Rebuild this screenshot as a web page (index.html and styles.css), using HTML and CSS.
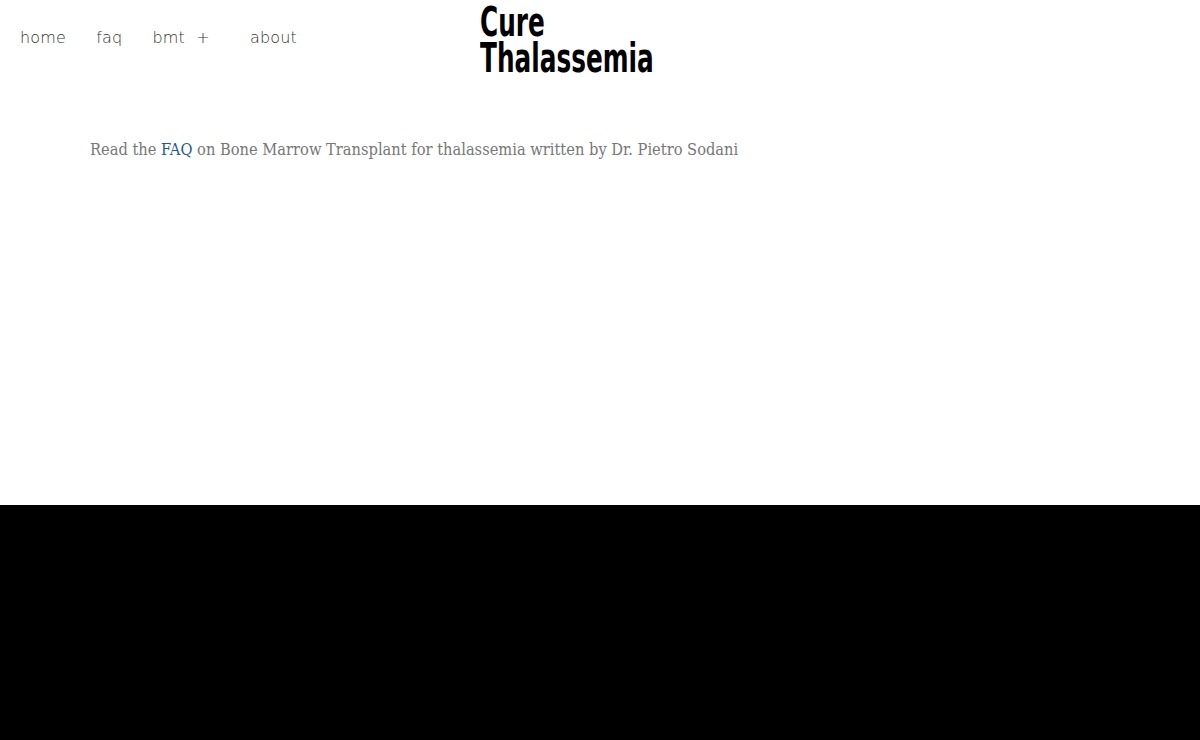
FILE: index.html
```html
<!DOCTYPE html>
<html>
<head>
<meta charset="utf-8">
<link rel="stylesheet" href="styles.css">
</head>
<body>
<header class="site-header">
  <nav class="nav">
    <a class="nav-item" href="#">home</a>
    <a class="nav-item" href="#">faq</a>
    <span class="nav-item nav-drop">bmt <span class="plus">+</span></span>
    <a class="nav-item" href="#">about</a>
  </nav>
  <div class="logo"><span class="logo-text">Cure<br>Thalassemia</span></div>
</header>
<main class="content">
  <p class="intro">Read the <a href="#" class="link">FAQ</a> on Bone Marrow Transplant for thalassemia written by Dr. Pietro Sodani</p>
</main>
<footer class="footer"></footer>
</body>
</html>
```
FILE: styles.css
```css
html, body { margin: 0; padding: 0; background: #fff; }
body { width: 1200px; height: 740px; overflow: hidden; display: flex; flex-direction: column; }
.site-header { display: flex; align-items: flex-start; height: 80px; }
.nav { display: flex; align-items: center; padding-left: 20px; width: 460px; height: 75px; gap: 30px; }
.nav-item { font-family: "DejaVu Sans", sans-serif; font-weight: 200; font-size: 16px; color: #333; text-decoration: none; letter-spacing: 0.2px; }
.nav-drop .plus { margin-left: 6px; margin-right: 10px; }
.logo { padding-top: 4px; }
.logo-text { display: inline-block; transform: scaleX(0.68); transform-origin: left top; font-family: "DejaVu Sans Condensed", sans-serif; font-weight: bold; font-size: 40.5px; line-height: 36px; color: #000; white-space: nowrap; }
.content { flex: 1; padding: 60px 0 0 90px; }
.intro { margin: 0; font-family: "DejaVu Serif Condensed", "DejaVu Serif", serif; font-size: 16.3px; color: #777; }
.link { color: #1e5a8c; text-decoration: none; }
.footer { height: 235px; background: #000; }
```
